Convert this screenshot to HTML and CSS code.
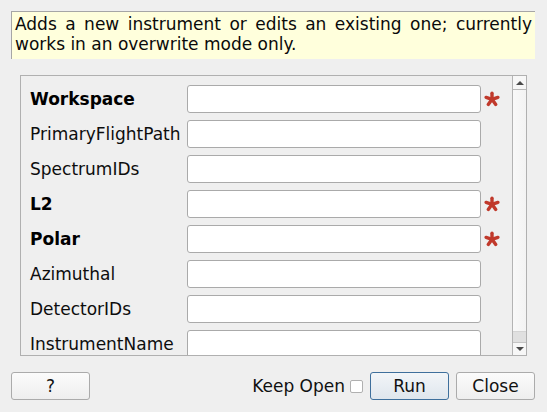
FILE: index.html
```html
<!DOCTYPE html>
<html>
<head>
<meta charset="utf-8">
<link rel="stylesheet" href="styles.css">
</head>
<body>
<div class="desc">Adds a new instrument or edits an existing one; currently works in an overwrite mode only.</div>
<div class="frame">
  <div class="content">
    <div class="grid">
      <div class="lbl req">Workspace</div><div class="inp"></div><div class="star"><svg width="16" height="16" viewBox="0 0 15 15"><g stroke="#c0392b" stroke-width="3.2" stroke-linecap="round"><line x1="7.5" y1="7.8" x2="7.5" y2="2"/><line x1="7.5" y1="7.8" x2="2" y2="6"/><line x1="7.5" y1="7.8" x2="13" y2="6"/><line x1="7.5" y1="7.8" x2="4" y2="12.6"/><line x1="7.5" y1="7.8" x2="11" y2="12.6"/></g></svg></div>
      <div class="lbl">PrimaryFlightPath</div><div class="inp"></div><div class="star"></div>
      <div class="lbl">SpectrumIDs</div><div class="inp"></div><div class="star"></div>
      <div class="lbl req">L2</div><div class="inp"></div><div class="star"><svg width="16" height="16" viewBox="0 0 15 15"><g stroke="#c0392b" stroke-width="3.2" stroke-linecap="round"><line x1="7.5" y1="7.8" x2="7.5" y2="2"/><line x1="7.5" y1="7.8" x2="2" y2="6"/><line x1="7.5" y1="7.8" x2="13" y2="6"/><line x1="7.5" y1="7.8" x2="4" y2="12.6"/><line x1="7.5" y1="7.8" x2="11" y2="12.6"/></g></svg></div>
      <div class="lbl req">Polar</div><div class="inp"></div><div class="star"><svg width="16" height="16" viewBox="0 0 15 15"><g stroke="#c0392b" stroke-width="3.2" stroke-linecap="round"><line x1="7.5" y1="7.8" x2="7.5" y2="2"/><line x1="7.5" y1="7.8" x2="2" y2="6"/><line x1="7.5" y1="7.8" x2="13" y2="6"/><line x1="7.5" y1="7.8" x2="4" y2="12.6"/><line x1="7.5" y1="7.8" x2="11" y2="12.6"/></g></svg></div>
      <div class="lbl">Azimuthal</div><div class="inp"></div><div class="star"></div>
      <div class="lbl">DetectorIDs</div><div class="inp"></div><div class="star"></div>
      <div class="lbl">InstrumentName</div><div class="inp"></div><div class="star"></div>
    </div>
  </div>
  <div class="sbar">
    <div class="sbtn up"><span class="tri-up"></span></div>
    <div class="handle"></div>
    <div class="trough"></div>
    <div class="sbtn down"><span class="tri-down"></span></div>
  </div>
</div>
<div class="buttons">
  <div class="btn">?</div>
  <div class="spacer"></div>
  <div class="keep">Keep Open</div>
  <div class="check"></div>
  <div class="btn run">Run</div>
  <div class="btn">Close</div>
</div>
</body>
</html>
```
FILE: styles.css
```css
html, body {
  margin: 0;
  padding: 0;
}
body {
  width: 547px;
  height: 412px;
  box-sizing: border-box;
  padding: 11px 12px 12px 11px;
  background: #efefef;
  font-family: "DejaVu Sans", sans-serif;
  font-size: 17px;
  color: #111;
  display: flex;
  flex-direction: column;
  overflow: hidden;
}
.desc {
  height: 48px;
  box-sizing: border-box;
  background: #ffffdc;
  border-top: 1px solid #a6a6a6;
  border-left: 1px solid #a6a6a6;
  padding: 2px 3px 0 3px;
  line-height: 20px;
  text-align: justify;
  color: #0a0a0a;
}
.frame {
  margin: 16px 8px 0 9px;
  height: 281px;
  box-sizing: border-box;
  border: 1px solid #b0b0b0;
  display: flex;
}
.content {
  flex: 1;
  overflow: hidden;
}
.grid {
  display: grid;
  grid-template-columns: 150px 294px 24px;
  grid-auto-rows: 28px;
  column-gap: 7px;
  row-gap: 7px;
  padding: 9px 0 0 9px;
}
.lbl {
  display: flex;
  align-items: center;
  white-space: nowrap;
  color: #0d0d0d;
}
.lbl.req {
  font-weight: bold;
  color: #000;
}
.inp {
  background: #fff;
  border: 1px solid #aaaaaa;
  border-radius: 3px;
  box-sizing: border-box;
}
.star {
  display: flex;
  align-items: center;
}
.star svg {
  display: block;
  margin-left: -4px;
}
.sbar {
  width: 14px;
  box-sizing: border-box;
  border-left: 1px solid #b4b4b4;
  display: flex;
  flex-direction: column;
  background: #f0f0f0;
}
.sbtn {
  display: flex;
  align-items: center;
  justify-content: center;
  background: #f7f7f7;
}
.sbtn.up {
  height: 14px;
  box-sizing: border-box;
  border-bottom: 1px solid #b8b8b8;
}
.sbtn.down {
  height: 13px;
  box-sizing: border-box;
  border-top: 1px solid #c4c4c4;
}
.tri-up {
  width: 0;
  height: 0;
  border-left: 4px solid transparent;
  border-right: 4px solid transparent;
  border-bottom: 4px solid #4a4a4a;
}
.tri-down {
  width: 0;
  height: 0;
  border-left: 4px solid transparent;
  border-right: 4px solid transparent;
  border-top: 4px solid #4a4a4a;
}
.handle {
  flex: 1;
  background: linear-gradient(to right, #f9f9f9, #f3f3f3);
}
.trough {
  height: 11px;
  background: #e0e0e0;
  border-top: 1px solid #d4d4d4;
  box-sizing: border-box;
}
.buttons {
  margin-top: 16px;
  height: 28px;
  display: flex;
  align-items: center;
}
.btn {
  width: 79px;
  height: 28px;
  box-sizing: border-box;
  border: 1px solid #ababab;
  border-radius: 3px;
  background: linear-gradient(to bottom, #fbfbfb, #eeeeee);
  display: flex;
  align-items: center;
  justify-content: center;
  color: #111;
}
.btn.run {
  border-color: #3e6f9c;
  background: linear-gradient(to bottom, #f2f5f8, #dfe6ed);
  margin-right: 7px;
}
.spacer {
  flex: 1;
}
.keep {
  white-space: nowrap;
}
.check {
  width: 13px;
  height: 13px;
  box-sizing: border-box;
  border: 1px solid #b0b0b0;
  border-radius: 2px;
  background: #fff;
  margin: 1px 7px 0 5px;
}
```
